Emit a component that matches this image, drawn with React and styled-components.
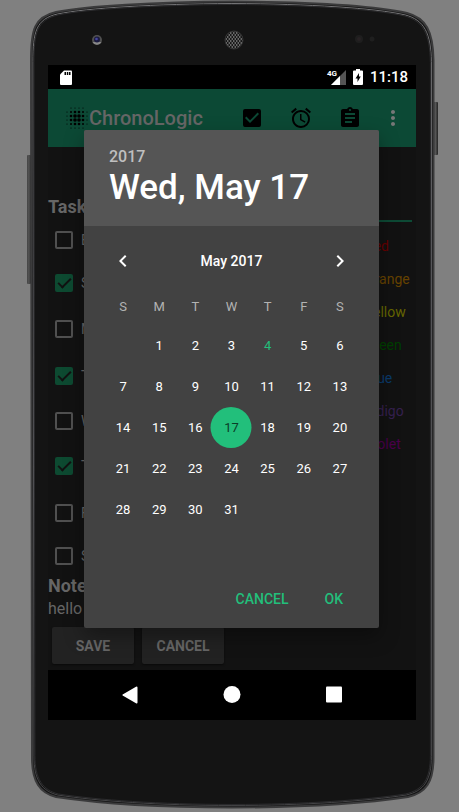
import React, { useState } from "react";
import styled, { createGlobalStyle } from "styled-components";
import {
  MdAlarm,
  MdAssignment,
  MdCheckBox,
  MdChevronLeft,
  MdChevronRight,
  MdMoreVert,
} from "react-icons/md";

const GlobalStyle = createGlobalStyle`
  *, *::before, *::after { box-sizing: border-box; }
  body {
    margin: 0;
    background: #808080;
    font-family: Roboto, sans-serif;
    color: #666;
  }
  button, input { font-family: inherit; }
  button { border: 0; padding: 0; background: none; color: inherit; cursor: pointer; }
`;

const Page = styled.div`
  display: flex;
  justify-content: center;
  min-height: 100vh;
  padding: 0 25px 0 30px;
  overflow: hidden;
`;

const Phone = styled.div`
  position: relative;
  flex: 1;
  max-width: 520px;
  padding: 0 18px 92px;
`;

const Shell = styled.svg`
  position: absolute;
  top: 0;
  left: -4px;
  width: calc(100% + 9px);
  height: 812px;
  z-index: -1;
`;

const Sensors = styled.div`
  display: grid;
  grid-template-columns: 1fr auto 1fr;
  align-items: center;
  height: 65px;
  padding: 15px 40px 0 43px;

  svg { display: block; }
  svg:last-child { justify-self: end; }
`;

const Screen = styled.div`
  position: relative;
  background: #121212;
`;

const StatusBar = styled.div`
  display: flex;
  align-items: center;
  height: 24px;
  padding: 0 8px 0 12px;
  background: #000;
  color: #fff;
  font-size: 15px;
  font-weight: 500;

  svg { display: block; }
`;

const StatusGroup = styled.div`
  display: flex;
  align-items: center;
  gap: 7px;
  margin-left: auto;
`;

const AppBar = styled.header`
  display: flex;
  align-items: center;
  height: 58px;
  padding: 0 11px 0 18px;
  background: #0c4935;
`;

const AppTitle = styled.h1`
  flex: 1;
  margin: 0 0 0 1px;
  font-size: 20px;
  line-height: 24px;
  font-weight: 500;
`;

const AppActions = styled.div`
  display: flex;
  gap: 25px;
`;

const BarButton = styled.button`
  width: 24px;
  height: 24px;
  color: ${(p) => (p.$soft ? "#777" : "#000")};
  margin-left: ${(p) => (p.$soft ? "-6px" : "0")};

  svg { display: block; width: 24px; height: 24px; }
`;

const Content = styled.main`
  padding-bottom: 6px;
`;

const Columns = styled.div`
  display: flex;
  justify-content: space-between;
`;

const DaysColumn = styled.section`
  padding-top: 48px;
`;

const Heading = styled.h2`
  margin: 0;
  font-size: 18px;
  line-height: 24px;
  font-weight: 700;
`;

const DayList = styled.div`
  display: grid;
  grid-template-rows: 42px 44px 48px 46px 44px 46px 48px 37px;
`;

const DayLabel = styled.label`
  display: flex;
  align-items: center;
  gap: 8px;
  padding-left: 7px;
  font-size: 14px;
`;

const CheckBox = styled.input`
  appearance: none;
  display: grid;
  place-items: center;
  width: 18px;
  height: 18px;
  margin: 0;
  border: 2px solid #505050;
  border-radius: 2px;

  &:checked {
    border-color: #0d4a31;
    background: #0d4a31;
  }

  &:checked::after {
    content: "";
    width: 13px;
    height: 7px;
    margin-bottom: 4px;
    border: solid #121212;
    border-width: 0 0 2px 2px;
    transform: rotate(-45deg);
  }
`;

const ColorColumn = styled.section`
  display: flex;
  flex-direction: column;
  align-items: flex-end;
  padding: 38px 4px 0 0;
`;

const NameInput = styled.input`
  width: 180px;
  height: 37px;
  padding: 0;
  border: 0;
  border-bottom: 2px solid #0d4a35;
  background: none;
  color: inherit;
  font-size: 16px;
`;

const ColorList = styled.ul`
  width: 47px;
  margin: 8px 0 0;
  padding: 0;
  list-style: none;
  font-size: 14px;
  line-height: 33px;
`;

const ColorItem = styled.li`
  color: ${(p) => p.$ink};
`;

const NoteText = styled.p`
  margin: 0;
  font-size: 16px;
  line-height: 22px;
`;

const FormButtons = styled.div`
  display: flex;
  gap: 8px;
  padding: 7px 4px 0;
`;

const FormButton = styled.button`
  width: 82px;
  height: 37px;
  border-radius: 2px;
  background: #222;
  box-shadow: 0 1px 2px #0a0a0a;
  font-size: 14px;
  font-weight: 700;
`;

const NavBar = styled.nav`
  display: flex;
  justify-content: center;
  gap: 78px;
  align-items: center;
  height: 50px;
  background: #000;
`;

const NavButton = styled.button`
  width: 24px;
  height: 24px;

  svg { display: block; width: 24px; height: 24px; fill: #fff; }
`;

const Dialog = styled.section`
  position: absolute;
  top: 65px;
  left: 36px;
  right: 37px;
  border-radius: 2px;
  background: #424242;
  box-shadow: 0 8px 20px rgba(0, 0, 0, 0.35);
  color: #fff;
  overflow: hidden;
`;

const DialogHeader = styled.header`
  height: 96px;
  padding: 17px 25px 0;
  background: #555;
`;

const Year = styled.div`
  color: #bfbfbf;
  font-size: 16px;
  line-height: 20px;
  font-weight: 500;
`;

const SelectedDate = styled.div`
  font-size: 35px;
  line-height: 42px;
  font-weight: 500;
`;

const Picker = styled.div`
  padding: 15px 21px 51px;
`;

const MonthBar = styled.div`
  display: flex;
  align-items: center;
  justify-content: space-between;
  height: 40px;
  font-size: 14px;
  font-weight: 500;
`;

const MonthButton = styled.button`
  display: grid;
  place-items: center;
  width: 36px;
  height: 40px;

  svg { width: 24px; height: 24px; }
`;

const Calendar = styled.table`
  width: 100%;
  margin-top: 6px;
  border-collapse: collapse;
  table-layout: fixed;

  th {
    height: 38px;
    padding: 0;
    color: #b3b3b3;
    font-size: 13px;
    font-weight: 400;
  }

  td { height: 41px; padding: 0; }
`;

const DayButton = styled.button`
  position: relative;
  z-index: 0;
  display: block;
  width: 100%;
  height: 41px;
  font-size: 13px;
  color: ${(p) => (p.$selected ? "#0b3d28" : p.$today ? "#22bf7b" : "#fff")};

  &::before {
    content: "";
    display: ${(p) => (p.$selected ? "block" : "none")};
    position: absolute;
    z-index: -1;
    top: 0;
    left: 50%;
    width: 41px;
    height: 41px;
    border-radius: 50%;
    background: #22bf7b;
    transform: translateX(-50%);
  }
`;

const DialogActions = styled.footer`
  display: flex;
  justify-content: flex-end;
  gap: 20px;
  padding: 0 28px 11px;
`;

const TextButton = styled.button`
  height: 36px;
  padding: 0 8px;
  color: #22bf7b;
  font-size: 14px;
  font-weight: 500;
`;

const days = [
  ["Every", false],
  ["Sun", true],
  ["Mon", false],
  ["Tue", true],
  ["Wed", false],
  ["Thu", true],
  ["Fri", false],
  ["Sat", false],
];

const colors = [
  ["Red", "#650000"],
  ["Orange", "#664200"],
  ["Yellow", "#666600"],
  ["Green", "#003f00"],
  ["Blue", "#0a3a6b"],
  ["Indigo", "#35204f"],
  ["Violet", "#4b004b"],
];

const weekdays = ["S", "M", "T", "W", "T", "F", "S"];
const weeks = [0, 1, 2, 3, 4].map((w) =>
  weekdays.map((_, d) => {
    const n = w * 7 + d;
    return n > 0 && n < 32 ? n : null;
  })
);

const shellPath =
  "M5 60C5 30 8 17 30 12C60 6 128 2 206 1.500C284 2 350 6 381 13C400 18 407 31 407.500 60V758C407.500 782 400 793 382 797C342 803 280 807.500 206 807.500C132 807.500 70 803 30 797C14 793 6 782 6 758Z";

function PhoneShell() {
  return (
    <Shell viewBox="0 0 413 812" preserveAspectRatio="none" aria-hidden="true">
      <defs>
        <linearGradient id="key" x1="0" x2="1" y1="0" y2="0">
          <stop offset="0" stopColor="#444" />
          <stop offset="0.5" stopColor="#555" />
          <stop offset="1" stopColor="#222" />
        </linearGradient>
        <linearGradient id="rim" x1="0" x2="0" y1="0" y2="1">
          <stop offset="0" stopColor="#747476" />
          <stop offset="0.3" stopColor="#5c5c60" />
          <stop offset="1" stopColor="#444446" />
        </linearGradient>
      </defs>
      <rect x="1" y="155" width="4" height="129" rx="1" fill="url(#key)" />
      <rect x="407" y="102" width="5" height="53" rx="1" fill="url(#key)" />
      <path d={shellPath} fill="#141414" stroke="#3b3b3c" strokeWidth="2" />
      <path
        d={shellPath}
        fill="#141414"
        stroke="url(#rim)"
        strokeWidth="1"
        transform="translate(2 2) scale(.99 .995)"
      />
      <path
        d={shellPath}
        fill="#141414"
        stroke="#2c2c2e"
        strokeWidth="1"
        transform="translate(3 3) scale(.985 .9925)"
      />
    </Shell>
  );
}

function Camera() {
  return (
    <svg width="12" height="12" viewBox="0 0 12 12" aria-hidden="true">
      <circle cx="6" cy="6" r="5" fill="#505050" />
      <path d="M1.500 8a5 5 0 0 0 9 0z" fill="#888" />
      <circle cx="6" cy="5.500" r="3" fill="#1b1b40" />
      <circle cx="5.500" cy="5" r="1.300" fill="#4646a0" />
    </svg>
  );
}

function Speaker() {
  return (
    <svg width="20" height="20" viewBox="0 0 20 20" aria-hidden="true">
      <defs>
        <pattern id="mesh" width="3" height="4" patternUnits="userSpaceOnUse">
          <rect width="3" height="4" fill="#666" />
          <circle cx="0.750" cy="1" r="1" fill="#111" />
          <circle cx="2.250" cy="3" r="1" fill="#111" />
        </pattern>
      </defs>
      <circle cx="10" cy="10" r="9" fill="url(#mesh)" stroke="#333" />
    </svg>
  );
}

function Proximity() {
  return (
    <svg width="22" height="10" viewBox="0 0 22 10" aria-hidden="true">
      <circle cx="5" cy="4" r="4" fill="#1e1e1e" />
      <circle cx="5" cy="4" r="2" fill="#272224" />
      <circle cx="18" cy="4" r="2.500" fill="#1f1f1f" />
    </svg>
  );
}

function SdCard() {
  return (
    <svg width="12" height="15" viewBox="0 0 12 15" aria-hidden="true">
      <path d="M4 0.500H11a1 1 0 0 1 1 1V14a1 1 0 0 1-1 1H1a1 1 0 0 1-1-1V4.500z" fill="#fff" />
      <path d="M4.500 2H6v3H4.500zM6.800 2H8.300v3H6.800zM9 2h1.500v3H9z" fill="#000" />
    </svg>
  );
}

const SignalBox = styled.span`
  position: relative;
  display: block;
  width: 19px;
  height: 15px;

  b {
    position: absolute;
    top: -1px;
    left: 0;
    font-size: 8px;
    line-height: 9px;
  }
`;

function Signal() {
  return (
    <SignalBox>
      <svg width="19" height="15" viewBox="0 0 19 15" aria-hidden="true">
        <path d="M19 0V15H4z" fill="#555" />
        <path d="M13 6V15H4z" fill="#fff" />
      </svg>
      <b>4G</b>
    </SignalBox>
  );
}

function Battery() {
  return (
    <svg width="10" height="16" viewBox="0 0 10 16" aria-hidden="true">
      <path d="M3 0h4v1.500h2a1 1 0 0 1 1 1V15a1 1 0 0 1-1 1H1a1 1 0 0 1-1-1V2.500a1 1 0 0 1 1-1h2z" fill="#fff" />
      <path d="M6 4L2.500 9.500h2V13L7.800 7.500H6z" fill="#000" />
    </svg>
  );
}

function dotRadius(x, y) {
  const far = Math.hypot(x - 2.5, y - 2.5);
  if (far < 1) return 1.8;
  if (far < 2) return 1.3;
  if (far < 2.3) return 1;
  return far < 3 ? 0.6 : 0;
}

function Logo() {
  const dots = [];
  for (let y = 0; y < 6; y++) {
    for (let x = 0; x < 6; x++) {
      dots.push(
        <circle key={`${x}-${y}`} cx={1 + x * 4} cy={1 + y * 4} r={dotRadius(x, y)} />
      );
    }
  }
  return (
    <svg width="22" height="22" viewBox="0 0 22 22" aria-hidden="true">
      {dots}
    </svg>
  );
}

export default function App() {
  const [selected, setSelected] = useState(17);
  const date = new Date(2017, 4, selected);
  const weekday = date.toLocaleDateString("en-US", { weekday: "short" });

  return (
    <>
      <GlobalStyle />
      <Page>
        <Phone>
          <PhoneShell />
          <Sensors>
            <Camera />
            <Speaker />
            <Proximity />
          </Sensors>
          <Screen>
            <StatusBar>
              <SdCard />
              <StatusGroup>
                <Signal />
                <Battery />
                <span>11:18</span>
              </StatusGroup>
            </StatusBar>
            <AppBar>
              <Logo />
              <AppTitle>ChronoLogic</AppTitle>
              <AppActions>
                <BarButton aria-label="Tasks"><MdCheckBox /></BarButton>
                <BarButton aria-label="Alarms"><MdAlarm /></BarButton>
                <BarButton aria-label="Notes"><MdAssignment /></BarButton>
                <BarButton aria-label="More" $soft><MdMoreVert /></BarButton>
              </AppActions>
            </AppBar>
            <Content>
              <Columns>
                <DaysColumn>
                  <Heading>Task</Heading>
                  <DayList>
                    {days.map(([name, on]) => (
                      <DayLabel key={name}>
                        <CheckBox type="checkbox" defaultChecked={on} />
                        {name}
                      </DayLabel>
                    ))}
                  </DayList>
                </DaysColumn>
                <ColorColumn>
                  <NameInput aria-label="Task name" />
                  <ColorList>
                    {colors.map(([name, ink]) => (
                      <ColorItem key={name} $ink={ink}>{name}</ColorItem>
                    ))}
                  </ColorList>
                </ColorColumn>
              </Columns>
              <Heading>Notes</Heading>
              <NoteText>hello</NoteText>
              <FormButtons>
                <FormButton>SAVE</FormButton>
                <FormButton>CANCEL</FormButton>
              </FormButtons>
            </Content>
            <NavBar>
              <NavButton aria-label="Back">
                <svg viewBox="0 0 24 24"><path d="M19.500 4.500V19.500a1 1 0 0 1-1.500.8L5.500 13a1 1 0 0 1 0-2L18 3.700a1 1 0 0 1 1.500.8z" /></svg>
              </NavButton>
              <NavButton aria-label="Home">
                <svg viewBox="0 0 24 24"><circle cx="12" cy="11.500" r="8.500" /></svg>
              </NavButton>
              <NavButton aria-label="Recent apps">
                <svg viewBox="0 0 24 24"><rect x="4" y="3.500" width="16" height="16" rx="1" /></svg>
              </NavButton>
            </NavBar>
            <Dialog role="dialog" aria-label="Pick a date">
              <DialogHeader>
                <Year>2017</Year>
                <SelectedDate>{weekday}, May {selected}</SelectedDate>
              </DialogHeader>
              <Picker>
                <MonthBar>
                  <MonthButton aria-label="Previous month"><MdChevronLeft /></MonthButton>
                  <span>May 2017</span>
                  <MonthButton aria-label="Next month"><MdChevronRight /></MonthButton>
                </MonthBar>
                <Calendar>
                  <thead>
                    <tr>{weekdays.map((d, i) => <th key={i} scope="col">{d}</th>)}</tr>
                  </thead>
                  <tbody>
                    {weeks.map((week, w) => (
                      <tr key={w}>
                        {week.map((n, i) => (
                          <td key={i}>
                            {n && (
                              <DayButton
                                $selected={n === selected}
                                $today={n === 4}
                                onClick={() => setSelected(n)}
                              >
                                {n}
                              </DayButton>
                            )}
                          </td>
                        ))}
                      </tr>
                    ))}
                  </tbody>
                </Calendar>
              </Picker>
              <DialogActions>
                <TextButton>CANCEL</TextButton>
                <TextButton>OK</TextButton>
              </DialogActions>
            </Dialog>
          </Screen>
        </Phone>
      </Page>
    </>
  );
}
